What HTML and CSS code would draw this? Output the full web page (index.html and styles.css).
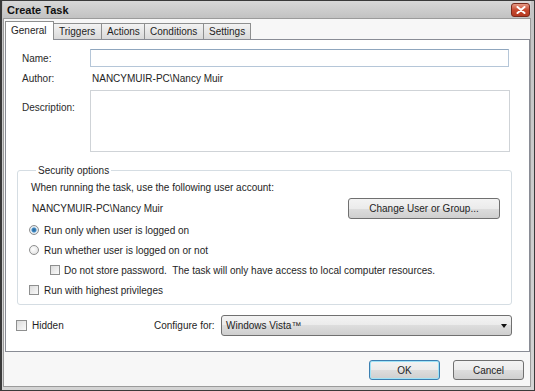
FILE: index.html
```html
<!DOCTYPE html>
<html lang="en">
<head>
  <meta charset="UTF-8">
  <title>Create Task</title>
  <link rel="stylesheet" href="styles.css">
</head>
<body>

  <div class="window">
    <div class="titlebar">
      <span class="title">Create Task</span>
      <span class="close">
        <svg width="10" height="8" viewBox="0 0 10 8">
          <path d="M1.5 1 L8.5 7 M8.5 1 L1.5 7" stroke="#fff" stroke-width="2" stroke-linecap="round"/>
        </svg>
      </span>
    </div>

    <div class="client">
      <div class="tabs">
        <div class="tab active">General</div>
        <div class="tab">Triggers</div>
        <div class="tab">Actions</div>
        <div class="tab">Conditions</div>
        <div class="tab">Settings</div>
      </div>

      <div class="panel">
        <div class="row name-row">
          <span class="label">Name:</span>
          <div class="textbox"></div>
        </div>
        <div class="row author-row">
          <span class="label">Author:</span>
          <span class="value">NANCYMUIR-PC\Nancy Muir</span>
        </div>
        <div class="row desc-row">
          <span class="label">Description:</span>
          <div class="textarea"></div>
        </div>

        <fieldset class="security">
          <legend>Security options</legend>
          <div class="sec-text">When running the task, use the following user account:</div>
          <div class="account-row">
            <span>NANCYMUIR-PC\Nancy Muir</span>
            <div class="btn change-btn">Change User or Group...</div>
          </div>
          <div class="option first">
            <span class="radio checked"></span>
            <span>Run only when user is logged on</span>
          </div>
          <div class="option">
            <span class="radio"></span>
            <span>Run whether user is logged on or not</span>
          </div>
          <div class="option indent">
            <span class="check"></span>
            <span>Do not store password.&nbsp; The task will only have access to local computer resources.</span>
          </div>
          <div class="option">
            <span class="check"></span>
            <span>Run with highest privileges</span>
          </div>
        </fieldset>

        <div class="bottom-row">
          <div class="hidden-opt">
            <span class="check"></span>
            <span>Hidden</span>
          </div>
          <span class="config-label">Configure for:</span>
          <div class="select">
            <span>Windows Vista™</span>
            <span class="arrow"></span>
          </div>
        </div>
      </div>

      <div class="footer">
        <div class="btn ok-btn">OK</div>
        <div class="btn">Cancel</div>
      </div>
    </div>
  </div>

</body>
</html>
```

FILE: styles.css
```css
body {
  margin: 0;
  font-family: "Liberation Sans", Arial, sans-serif;
  font-size: 10px;
  color: #1e1e1e;
  background: #fff;
}

.window {
  width: 535px;
  height: 391px;
  box-sizing: border-box;
  border: 1px solid #3a3a3a;
  border-left-width: 2px;
  padding: 0 3px 3px 1px;
  background: linear-gradient(#c4c4c4, #d4d4d4);
  display: flex;
  flex-direction: column;
}

.titlebar {
  height: 17px;
  display: flex;
  align-items: center;
  justify-content: space-between;
  padding-left: 4px;
  background: linear-gradient(#d8d8d8, #c2c2c2);
}

.title {
  font-weight: bold;
  font-size: 11px;
  color: #111;
}

.close {
  width: 17px;
  height: 12px;
  margin-top: 1px;
  margin-right: 1px;
  border: 1px solid #7a2a1c;
  border-radius: 3px;
  background: linear-gradient(#e59a85, #c74a30 50%, #b53a22);
  display: flex;
  align-items: center;
  justify-content: center;
}

.client {
  flex: 1;
  background: #f7f7f7;
  border: 1px solid #9b9b9b;
  padding: 0 0 0 1px;
  display: flex;
  flex-direction: column;
}

/* onglets */
.tabs {
  display: flex;
  align-items: flex-end;
  height: 19px;
  padding-top: 1px;
}

.tab {
  height: 15px;
  line-height: 15px;
  padding: 0 5px;
  border: 1px solid #8e8f8f;
  border-bottom: none;
  margin-right: -1px;
  background: linear-gradient(#f3f3f3, #e6e6e6 50%, #d9d9d9);
  color: #1e1e1e;
}

.tab:nth-child(2) { width: 37px; }
.tab:nth-child(3) { width: 32px; }
.tab:nth-child(4) { width: 48px; }
.tab:nth-child(5) { width: 36px; }

.tab.active {
  width: 37px;
  height: 18px;
  line-height: 18px;
  background: #fff;
  position: relative;
  z-index: 1;
  margin-bottom: -1px;
}

.panel {
  height: 313px;
  background: #fff;
  border: 1px solid #898c95;
  box-sizing: border-box;
}

.row {
  display: flex;
  padding-left: 16px;
}

.label {
  width: 68px;
  color: #2a2a2a;
}

.name-row {
  margin-top: 9px;
  align-items: center;
}

.textbox {
  width: 419px;
  height: 18px;
  box-sizing: border-box;
  border: 1px solid #b5c6d8;
  border-top-color: #8fa6be;
}

.author-row {
  height: 23px;
  align-items: center;
}

.value {
  padding-left: 2px;
}

.desc-row .label {
  padding-top: 12px;
}

.textarea {
  width: 420px;
  height: 62px;
  box-sizing: border-box;
  border: 1px solid #cfd3d7;
}

/* options de securite */
.security {
  margin: 13px 17px 0 11px;
  padding: 0 11px 0 13px;
  height: 140px;
  box-sizing: border-box;
  border: 1px solid #d5dde3;
  border-radius: 3px;
  min-width: 0;
}

.security legend {
  padding: 0 2px;
  margin-left: 5px;
  color: #1e1e1e;
}

.sec-text {
  margin-top: 6px;
}

.account-row {
  display: flex;
  align-items: center;
  justify-content: space-between;
  padding-left: 1px;
  margin-top: 5px;
}

.btn {
  height: 20px;
  box-sizing: border-box;
  border: 1px solid #707070;
  border-radius: 3px;
  background: linear-gradient(#f3f3f3, #ebebeb 50%, #dddddd 50%, #cfcfcf);
  display: flex;
  align-items: center;
  justify-content: center;
  color: #1e1e1e;
}

.change-btn {
  width: 152px;
  height: 21px;
}

.option {
  display: flex;
  align-items: center;
  height: 20px;
  gap: 5px;
}

.option.first {
  margin-top: 1px;
}

.option.indent {
  padding-left: 19px;
  gap: 4px;
}

.radio {
  width: 10px;
  height: 10px;
  box-sizing: border-box;
  border-radius: 50%;
  border: 1px solid #8e8f8f;
  background: radial-gradient(circle at 40% 40%, #fff, #dcdcdc);
  margin-left: -2px;
}

.radio.checked {
  background: radial-gradient(circle, #2a5e8c 0, #3d8ac6 2px, #e6eef5 3px, #dcdcdc);
}

.check {
  width: 10px;
  height: 10px;
  box-sizing: border-box;
  border: 1px solid #8e8f8f;
  background: linear-gradient(135deg, #dcdcdc, #fafafa);
}

.option > .check {
  margin-left: -2px;
}

.option.indent > .check {
  margin-left: 0;
}

/* ligne du bas */
.bottom-row {
  display: flex;
  align-items: center;
  margin: 10px 0 0 10px;
}

.hidden-opt {
  display: flex;
  align-items: center;
  gap: 5px;
  width: 138px;
}

.hidden-opt .check {
  width: 11px;
  height: 11px;
}

.config-label {
  width: 67px;
}

.select {
  width: 291px;
  height: 21px;
  box-sizing: border-box;
  border: 1px solid #707070;
  border-radius: 3px;
  background: linear-gradient(#f3f3f3, #ebebeb 50%, #dddddd 50%, #cfcfcf);
  display: flex;
  align-items: center;
  justify-content: space-between;
  padding: 0 4px 0 4px;
}

.arrow {
  width: 0;
  height: 0;
  border-left: 3px solid transparent;
  border-right: 3px solid transparent;
  border-top: 4px solid #111;
}

.footer {
  flex: 1;
  display: flex;
  justify-content: flex-end;
  align-items: flex-start;
  gap: 13px;
  padding: 8px 6px 0 0;
}

.footer .btn {
  width: 71px;
}

.ok-btn {
  border-color: #3c7fb1;
  box-shadow: inset 0 0 0 1px #9fe3f7;
}
```
